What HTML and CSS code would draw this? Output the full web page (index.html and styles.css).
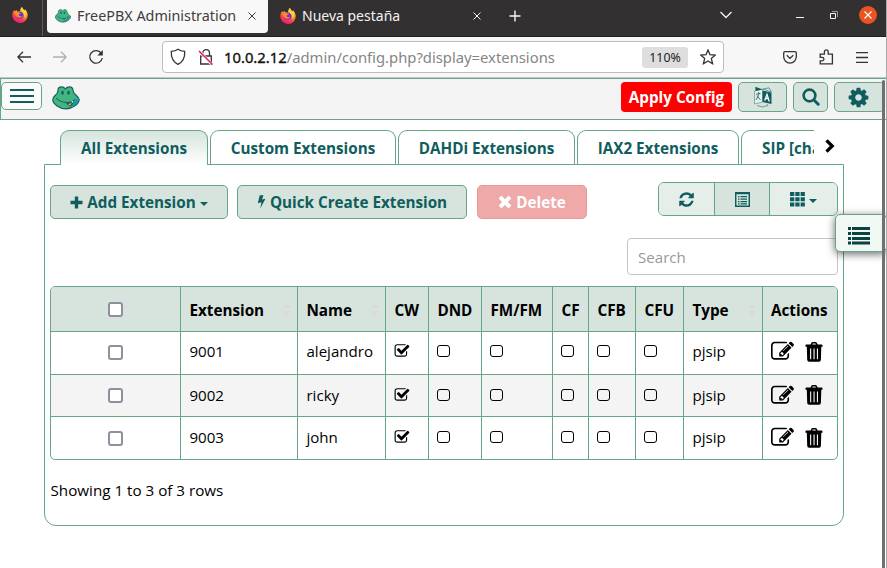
FILE: index.html
```html
<!DOCTYPE html>
<html lang="es">
<head>
<meta charset="utf-8">
<title>FreePBX Administration</title>
<link rel="stylesheet" href="styles.css">
</head>
<body>
<svg class="defs" aria-hidden="true">
  <defs>
    <linearGradient id="flame" x1=".8" y1="0" x2=".3" y2="1"><stop offset="0" stop-color="#fff14a"/><stop offset=".4" stop-color="#ff9a26"/><stop offset=".72" stop-color="#ff3b4a"/><stop offset="1" stop-color="#e5168c"/></linearGradient>
    <symbol id="firefox" viewBox="0 0 16 16">
      <path fill="url(#flame)" d="M10 0c.4 1.700 1.500 2.300 2.600 3.500.3-.4.2-1 .1-1.400 1.800 1.500 3 3.900 3 6.100A7.700 7.700 0 0 1 .3 8.400C.3 6 1.200 4.200 2.300 3l.5 1.300C3.300 3.600 4.200 3 5 2.900c-.3.6-.2 1.100.1 1.500L8 4.200C8 2.400 8.800.9 10 0z"/>
      <circle cx="7.800" cy="8.200" r="3.600" fill="#6a35d8"/>
      <path fill="#ff8b24" d="M3 5c1.600-.8 3-.5 4 .5l1.800.2C8.600 7 7.300 6.900 6.500 7.700c.6 1.700 2.600 2 4 1-1 2.400-4.400 2.800-6.200.6C3.400 8.200 3 6.500 3 5z"/>
      <path fill="#ffd43a" d="M10 0c.4 1.700 1.500 2.300 2.600 3.500 2 2.600 1.500 6-.3 7.700.5-3-.3-4.700-2.100-6C8.800 4.200 8.800 1.500 10 0z"/>
    </symbol>
    <symbol id="frog" viewBox="0 0 28 24">
      <path fill="#43b581" stroke="#14605f" stroke-width="1.200" d="M6 4.500C6 2 7.500.9 9.500.9c1.700 0 3.100.8 3.900 2.100.9-1.300 2.300-2.100 4-2.100C19.400.9 20.900 2 21 4.500c.2 2.200 1.300 3.100 2.600 4.300 1.600 1.500 3.600 3 3.600 4.700 0 4.300-7 9.400-13.200 9.400S.8 18 .8 13.800C.8 12 2 10.300 3.600 9 5.300 7.500 6 6.500 6 4.500z"/>
      <path fill="#1b9aa0" d="M26.800 12.200c.8 3.600-4 8.500-9.800 9.900l3.300-4.200 2.300-5z"/>
      <ellipse cx="10.500" cy="6.700" rx="1.300" ry="2" fill="#14605f"/><ellipse cx="16.500" cy="6.700" rx="1.300" ry="2" fill="#14605f"/>
      <path fill="none" stroke="#14605f" stroke-width="1" d="M4 12c3 3.300 8 4.900 12.500 4.300 2.500-.3 4.500-1.300 6-2.900"/>
      <path fill="#14605f" d="M14 16.500c3.300.2 5.700-.7 8-2.600-.2 3.200-1.600 5.700-4 6.300-1.700.2-3.200-1.700-4-3.700z"/>
      <path fill="#f6a23d" d="M16 19.300c.5-1.600 1.900-2.300 3.800-2-.6 1.500-2 2.700-3.800 2z"/>
      <path fill="#fff" d="m19 15.800 2.300-1.100-.5 2z"/>
    </symbol>
    <symbol id="check" viewBox="0 0 1792 1792"><path d="M1472 930v318q0 119-84.500 203.500t-203.500 84.500h-832q-119 0-203.500-84.500t-84.500-203.500v-832q0-119 84.500-203.500t203.500-84.500h832q63 0 117 25 15 7 18 23 3 17-9 29l-49 49q-10 10-23 10-3 0-9-2-23-6-45-6h-832q-66 0-113 47t-47 113v832q0 66 47 113t113 47h832q66 0 113-47t47-113v-254q0-13 9-22l64-64q10-10 23-10 6 0 12 3 20 8 20 29zm231-489l-814 814q-24 24-57 24t-57-24l-430-430q-24-24-24-57t24-57l110-110q24-24 57-24t57 24l263 263 647-647q24-24 57-24t57 24l110 110q24 24 24 57t-24 57z"/></symbol>
    <symbol id="edit" viewBox="0 0 1792 1792"><path d="M888 1184l116-116-152-152-116 116v56h96v96h56zm440-720q-16-16-33 1l-350 350q-17 17-1 33t33-1l350-350q17-17 1-33zm80 594v190q0 119-84.500 203.500t-203.500 84.500h-832q-119 0-203.500-84.500t-84.500-203.500v-832q0-119 84.500-203.500t203.500-84.500h832q63 0 117 25 15 7 18 23 3 17-9 29l-49 49q-14 14-32 8-23-6-45-6h-832q-66 0-113 47t-47 113v832q0 66 47 113t113 47h832q66 0 113-47t47-113v-126q0-13 9-22l64-64q15-15 35-7t20 29zm-96-738l288 288-672 672h-288v-288zm444 132l-92 92-288-288 92-92q28-28 68-28t68 28l152 152q28 28 28 68t-28 68z"/></symbol>
    <symbol id="trash" viewBox="0 0 18 20"><path fill-rule="evenodd" d="M5.500 2.600 6.300.9Q6.700.1 7.600.1h3Q11.500.1 11.900.9l.8 1.700h4q.8 0 .8.8v1.400h-1.200l-.4 13q-.1 2-1.900 2H4.100q-1.800 0-1.900-2l-.4-13H.5V3.400q0-.8.800-.8zm1.700 0h3.800l-.5-1.100H7.700zM5.100 6.500v10.700h1.100V6.500zm3.400 0v10.700h1.100V6.500zm3.400 0v10.700h1.100V6.500z"/></symbol>
    <symbol id="cog" viewBox="0 0 1792 1792"><path d="M1152 896q0-106-75-181t-181-75-181 75-75 181 75 181 181 75 181-75 75-181zm512-109v222q0 12-8 23t-20 13l-185 28q-19 54-39 91 35 50 107 138 10 12 10 25t-9 23q-27 37-99 108t-94 71q-12 0-26-9l-138-108q-44 23-91 38-16 136-29 186-7 28-36 28h-222q-14 0-24.500-8.500t-11.500-21.500l-28-184q-49-16-90-37l-141 107q-10 9-25 9-14 0-25-11-126-114-165-168-7-10-7-23 0-12 8-23 15-21 51-66.500t54-70.500q-27-50-41-99l-183-27q-13-2-21-12.500t-8-23.500v-222q0-12 8-23t19-13l186-28q14-46 39-92-40-57-107-138-10-12-10-24 0-10 9-23 26-36 98.500-107.500t94.500-71.500q13 0 26 10l138 107q44-23 91-38 16-136 29-186 7-28 36-28h222q14 0 24.500 8.500t11.500 21.500l28 184q49 16 90 37l142-107q9-9 24-9 13 0 25 10 129 119 165 170 7 8 7 22 0 12-8 23-15 21-51 66.500t-54 70.500q26 50 41 98l183 28q13 2 21 12.500t8 23.500z"/></symbol>
    <symbol id="refresh" viewBox="0 0 1792 1792"><path d="M1639 1056q0 5-1 7-64 268-268 434.500t-478 166.500q-146 0-282.500-55t-243.500-157l-129 129q-19 19-45 19t-45-19-19-45v-448q0-26 19-45t45-19h448q26 0 45 19t19 45-19 45l-137 137q71 66 161 102t187 36q134 0 250-65t186-179q11-17 53-117 8-23 30-23h192q13 0 22.500 9.500t9.500 22.500zm25-800v448q0 26-19 45t-45 19h-448q-26 0-45-19t-19-45 19-45l138-138q-148-137-349-137-134 0-250 65t-186 179q-11 17-53 117-8 23-30 23h-199q-13 0-22.500-9.500t-9.500-22.500v-7q65-268 270-434.500t480-166.500q146 0 284 55.500t245 156.500l130-129q19-19 45-19t45 19 19 45z"/></symbol>
  </defs>
</svg>

<div class="browser">
  <div class="tabstrip">
    <div class="pinned"><svg width="16" height="16"><use href="#firefox"/></svg></div>
    <div class="btab active"><svg width="16" height="14"><use href="#frog"/></svg><span class="t1">FreePBX Administration</span><svg class="x" width="8" height="8" viewBox="0 0 8 8"><path d="m.5.5 7 7m0-7-7 7"/></svg></div>
    <div class="btab"><svg width="16" height="16"><use href="#firefox"/></svg><span class="t2">Nueva pestaña</span><svg class="x" width="8" height="8" viewBox="0 0 8 8"><path d="m.5.5 7 7m0-7-7 7"/></svg></div>
    <svg class="wm plus" width="12" height="12" viewBox="0 0 12 12"><path stroke-width="1.400" d="M6 .5v11M.5 6h11"/></svg>
    <svg class="wm down" width="12" height="8" viewBox="0 0 12 8"><path stroke-width="1.300" d="m.5 1 5.500 5.500L11.500 1"/></svg>
    <svg class="wm mini" width="8" height="8" viewBox="0 0 8 8"><path d="M0 7.500h8"/></svg>
    <svg class="wm restore" width="8" height="8" viewBox="0 0 8 8"><path d="M.5 2.500h5v5h-5z"/><path stroke="#999" d="M2 .5h5.500V6"/></svg>
    <span class="close"><svg width="8" height="8" viewBox="0 0 8 8"><path d="m.5.500 7 7m0-7-7 7"/></svg></span>
  </div>
  <div class="toolbar">
    <svg class="line" width="14" height="12" viewBox="0 0 14 12"><path d="M14 6H1m5-5.300L.8 6 6 11.300"/></svg>
    <svg class="line fwd" width="14" height="12" viewBox="0 0 14 12"><path d="M0 6h13M8 .7 13.200 6 8 11.300"/></svg>
    <svg class="line reload" width="16" height="16" viewBox="0 0 16 16"><path d="M13.300 4.300A6.300 6.300 0 1 0 14.300 9"/><path fill="#333" stroke="none" d="M14.800 1v5.500H9.300z"/></svg>
    <div class="urlbar">
      <svg class="line shield" width="16" height="18" viewBox="0 0 16 18"><path d="M8 1.200c2 1.500 4.200 2 6.700 2.200.3 5.800-1.400 10.400-6.700 12.900C2.700 13.800 1 9.200 1.300 3.400 3.800 3.200 6 2.700 8 1.200z"/></svg>
      <svg class="line lock" width="16" height="18" viewBox="0 0 16 18"><path d="M2.700 8h10.600v8H2.700zM4.700 8V5a3.400 3.400 0 0 1 6.800 0v3"/><path stroke="#f7f7f7" stroke-width="3" d="m1.500 3.500 12 12.500"/><path stroke="#e2174c" stroke-width="1.400" d="m1 3 13.500 13.500"/></svg>
      <span class="url"><b>10.0.2.12</b>/admin/config.php?display=extensions</span>
      <span class="zoomlvl">110%</span>
      <svg class="line" width="16" height="16" viewBox="0 0 16 16"><path d="m8 .9 2 4.800 5.300.4-4 3.400 1.300 5.200L8 11.900l-4.600 2.800 1.300-5.200-4-3.400L6 5.700z"/></svg>
    </div>
    <svg class="line pocket" width="14" height="13" viewBox="0 0 14 13"><path d="M2 .7h10q1.300 0 1.300 1.300v3.800a6.300 6.300 0 0 1-12.600 0V2Q.7.700 2 .7zM3.800 4.300 7 7.400l3.200-3.100"/></svg>
    <svg class="line puzzle" width="15" height="16" viewBox="0 0 15 16"><path d="M1.200 5.200h4.200V2.800a1.900 1.900 0 0 1 3.800 0v2.400h4.200v9.700H1.200v-3h1.900a1.800 1.800 0 0 0 0-3.600H1.200z"/></svg>
    <svg class="line" width="12" height="11" viewBox="0 0 12 11"><path d="M0 .5h12M0 5.500h12M0 10.500h12"/></svg>
  </div>
</div>

<div class="page">
  <header class="topbar">
    <button class="burger"><i></i><i></i><i></i></button>
    <svg class="logo" width="28" height="24"><use href="#frog"/></svg>
    <button class="apply">Apply Config</button>
    <button class="hbtn lang"><svg width="20" height="22" viewBox="0 0 20 22"><path fill="#e8f1ec" stroke="#6b9c93" stroke-width=".8" d="m1.500 5 8-2v13l-8 2z"/><path fill="#0f5d5d" d="m9.500 4.500 9 2V18l-9-2z"/><path fill="#0f5d5d" d="m2.300.7 7.300 2.800L2.500 5z"/><path fill="none" stroke="#0f5d5d" stroke-width=".8" d="m3 8.300 4.500-1M5.500 6l.5 2-3 6m1-4.500L7.500 14"/><path fill="none" stroke="#fff" stroke-width="1.300" d="m11.700 14.500 2.300-6 2.300 7m-3.700-3h3"/><path fill="none" stroke="#6b9c93" d="M4 19.500q5 3 11 0l-1-1.300M18.500 6 10 3l6-1.200z"/></svg></button>
    <button class="hbtn find"><svg width="18" height="18" viewBox="0 0 18 18"><circle cx="7.500" cy="7.500" r="5.900" fill="none" stroke="#0f5d5d" stroke-width="2.600"/><path stroke="#0f5d5d" stroke-width="3" stroke-linecap="round" d="m12.200 12.200 4 4"/></svg></button>
    <button class="hbtn gear"><svg width="23" height="23"><use href="#cog"/></svg></button>
  </header>

  <nav class="tabs">
    <div class="scroller">
      <a class="tab on">All Extensions</a><a class="tab w2">Custom Extensions</a><a class="tab w3">DAHDi Extensions</a><a class="tab w4">IAX2 Extensions</a><a class="tab w5">SIP [chan_sip] Extensions</a>
    </div>
    <svg class="next" width="10" height="14" viewBox="0 0 10 14"><path fill="none" stroke="#000" stroke-width="3.300" d="m1.500 1.300 5.700 5.700-5.700 5.700"/></svg>
  </nav>

  <main class="panel">
    <div class="actions">
      <button class="btn add"><svg width="13" height="13" viewBox="0 0 13 13"><path stroke-width="3.400" d="M6.500.5v12M.5 6.500h12"/></svg><span>Add Extension</span><i class="caret"></i></button>
      <button class="btn quick"><svg width="9" height="14" viewBox="0 0 9 14"><path class="fill" d="M2.700.3h3.800L5 4.500l3.500-.8L3.200 13.600 4.500 7.300.8 8.200z"/></svg><span>Quick Create Extension</span></button>
      <button class="btn del"><svg width="14" height="14" viewBox="0 0 14 14"><path stroke-width="4" d="m2 2 10 10m0-10L2 12"/></svg><span>Delete</span></button>
      <div class="group">
        <button class="g1"><svg width="17" height="17"><use href="#refresh"/></svg></button>
        <button class="g2"><svg width="15" height="15" viewBox="0 0 15 15"><path fill="none" stroke="#0f5d5d" stroke-width="1.500" d="M.7.7h13.600v13.600H.7z"/><path fill="#0f5d5d" d="M1 0h13v2.300H1zM3 4h1.500v1.300H3zM3 6.500h1.500v1.300H3zM3 9h1.500v1.300H3zM3 11.300h1.500v1.300H3zM5.500 4H12v1.300H5.500zM5.500 6.500H12v1.300H5.500zM5.500 9H12v1.300H5.500zM5.500 11.300H12v1.300H5.500z"/></svg></button>
        <button class="g3"><svg width="15" height="15" viewBox="0 0 15 15"><path fill="#0f5d5d" d="M0 0h4.300v4H0zM5.300 0h4.300v4H5.300zM10.600 0h4.300v4h-4.300zM0 5.300h4.300v4H0zM5.300 5.300h4.300v4H5.300zM10.600 5.300h4.300v4h-4.300zM0 10.600h4.300v4H0zM5.300 10.600h4.300v4H5.300zM10.600 10.600h4.300v4h-4.300z"/></svg><i class="caret"></i></button>
      </div>
    </div>
    <div class="search">Search</div>
    <div class="tablewrap">
      <table>
        <colgroup><col class="c1"><col class="c2"><col class="c3"><col class="c4"><col class="c5"><col class="c6"><col class="c7"><col class="c8"><col class="c9"><col class="c10"><col class="c11"></colgroup>
        <thead><tr><th class="sel"><i class="cb"></i></th><th class="sort">Extension</th><th class="sort">Name</th><th>CW</th><th>DND</th><th>FM/FM</th><th>CF</th><th>CFB</th><th>CFU</th><th class="sort">Type</th><th>Actions</th></tr></thead>
        <tbody>
          <tr><td class="sel"><i class="cb"></i></td><td>9001</td><td>alejandro</td><td><svg class="ck" width="16" height="16"><use href="#check"/></svg></td><td><i class="sq"></i></td><td><i class="sq"></i></td><td><i class="sq"></i></td><td><i class="sq"></i></td><td><i class="sq"></i></td><td>pjsip</td><td><div class="ops"><svg width="23" height="23"><use href="#edit"/></svg><svg width="18" height="20"><use href="#trash"/></svg></div></td></tr>
          <tr class="alt"><td class="sel"><i class="cb"></i></td><td>9002</td><td>ricky</td><td><svg class="ck" width="16" height="16"><use href="#check"/></svg></td><td><i class="sq"></i></td><td><i class="sq"></i></td><td><i class="sq"></i></td><td><i class="sq"></i></td><td><i class="sq"></i></td><td>pjsip</td><td><div class="ops"><svg width="23" height="23"><use href="#edit"/></svg><svg width="18" height="20"><use href="#trash"/></svg></div></td></tr>
          <tr><td class="sel"><i class="cb"></i></td><td>9003</td><td>john</td><td><svg class="ck" width="16" height="16"><use href="#check"/></svg></td><td><i class="sq"></i></td><td><i class="sq"></i></td><td><i class="sq"></i></td><td><i class="sq"></i></td><td><i class="sq"></i></td><td>pjsip</td><td><div class="ops"><svg width="23" height="23"><use href="#edit"/></svg><svg width="18" height="20"><use href="#trash"/></svg></div></td></tr>
        </tbody>
      </table>
    </div>
    <p class="info">Showing 1 to 3 of 3 rows</p>
  </main>
</div>

<div class="drawer"><svg width="22" height="18" viewBox="0 0 22 18"><path fill="#0b4340" d="M0 0h3v3H0zM4 0h18v3H4zM0 5h3v3H0zM4 5h18v3H4zM0 10h3v3H0zM4 10h18v3H4zM0 14.500h3v3H0zM4 14.500h18v3H4z"/></svg></div>
<div class="scrollbar"></div>
<div class="edge"></div>
</body>
</html>
```
FILE: styles.css
```css
* { box-sizing: border-box; }
body {
  margin: 0;
  width: 887px;
  height: 568px;
  overflow: hidden;
  position: relative;
  background: #fff;
  color: #000;
  font: 15.4px/22px "Open Sans", "Noto Sans", sans-serif;
}
.defs { position: absolute; width: 0; height: 0; }
svg { display: block; flex: none; }
button { margin: 0; padding: 0; font: inherit; display: flex; align-items: center; justify-content: center; }

/* browser chrome */
.browser { font-family: "Noto Sans", sans-serif; }
.tabstrip { height: 37px; display: flex; align-items: flex-start; background: #323031; border-bottom: 1px solid #1f1f1f; }
.pinned { width: 43px; height: 36px; padding: 7px 0 0 12px; border-right: 1px solid #5d5b5c; margin-right: 4px; }
.btab { width: 221px; height: 33px; padding: 0 12px 2px 8px; display: flex; align-items: center; color: #f2f2f2; }
.btab + .btab { width: 223px; padding-left: 12px; padding-right: 10px; }
.btab span { margin-left: 6px; flex: 1; white-space: nowrap; font-size: 14.35px; }
.btab .t2 { font-size: 14px; }
.btab.active { background: #f8f8f8; color: #3d3d3d; border-radius: 0 0 4px 4px; }
.x { fill: none; stroke: currentColor; stroke-width: 1; }
.wm { fill: none; stroke: #f5f5f5; }
.plus { margin: 10px 0 0 18px; }
.down { margin: 11px 0 0 199px; }
.mini { margin: 10px 0 0 64px; }
.restore { margin: 11px 0 0 26px; }
.close { width: 18px; height: 18px; margin: 6px 0 0 21px; border-radius: 9px; background: #e95420; display: flex; align-items: center; justify-content: center; }
.close svg { fill: none; stroke: #fff; stroke-width: 1.2; }
.toolbar { height: 41px; background: #f7f7f7; border-bottom: 1px solid #c6c6c6; display: flex; align-items: center; padding-left: 17px; }
.line { fill: none; stroke: #333; stroke-width: 1.3; }
.fwd { margin-left: 22px; stroke: #b0b0b0; }
.reload { margin-left: 21px; }
.urlbar { width: 562px; height: 32px; margin-left: 58px; padding: 0 7px; border: 1px solid #bdbdbd; border-radius: 4px; background: #fff; display: flex; align-items: center; }
.lock { margin-left: 12px; }
.url { margin-left: 10px; flex: 1; color: #858585; white-space: nowrap; font-size: 14.8px; }
.url b { color: #111; font-weight: 400; -webkit-text-stroke: .35px #111; }
.zoomlvl { width: 46px; height: 21px; margin-right: 12px; border-radius: 3px; background: #dedede; color: #222; font-size: 12.4px; line-height: 21px; text-align: center; }
.pocket { margin-left: 59px; }
.puzzle { margin: 0 22px 0 22px; }

/* application bar */
.topbar { height: 42px; border: 1px solid #66a586; background: #f4f4f4; display: flex; align-items: flex-start; padding-top: 3px; }
.burger { width: 41px; height: 28px; border: 1px solid #66a586; border-radius: 5px; background: #fbfbfb; flex-direction: column; gap: 4px; }
.burger i { width: 24px; height: 2px; background: #0f5d5d; }
.logo { margin: 4px 0 0 10px; }
.apply { width: 111px; height: 30px; margin-left: 541px; padding-bottom: 1px; border: 0; border-radius: 4px; background: #f00; color: #fff; font-weight: 700; font-size: 15.25px; }
.hbtn { height: 30px; margin-left: 6px; border: 1px solid #66a586; border-radius: 5px; background: #d7e4dd; fill: #0f5d5d; }
.lang { width: 49px; }
.find { width: 35px; }
.gear { width: 51px; padding-right: 3px; flex: none; }

/* extension tabs */
.tabs { margin: 10px 0 0 44px; width: 800px; height: 35px; display: flex; position: relative; z-index: 1; }
.scroller { width: 770px; padding-left: 16px; display: flex; gap: 2px; overflow: hidden; }
.tab { flex: none; height: 34px; border: 1px solid #66a586; border-bottom: 0; border-radius: 9px 9px 0 0; background: #fff; color: #0f5d5d; font-weight: 700; font-size: 15.25px; line-height: 35px; text-align: center; white-space: nowrap; }
.tab.on { width: 148px; height: 35px; background: linear-gradient(#d7e4dd, #fff); }
.w2 { width: 186px; }
.w3 { width: 177px; }
.w4 { width: 162px; }
.w5 { padding: 0 20px; }
.next { margin: 9px 0 0 11px; }

/* main panel */
.panel { width: 800px; height: 362px; margin: -1px 0 0 44px; padding: 17px 5px 0; border: 1px solid #66a586; border-radius: 0 0 12px 12px; }
.actions { display: flex; align-items: flex-start; height: 34px; }
.btn { height: 34px; margin-top: 3px; border: 1px solid #66a586; border-radius: 5px; background: #d7e4dd; color: #0f5d5d; font-weight: 700; font-size: 15.25px; white-space: nowrap; }
.btn svg { fill: none; stroke: currentColor; margin-right: 4px; }
.btn .fill { fill: currentColor; stroke: none; }
.caret { border: 4px solid transparent; border-top-color: #0f5d5d; border-bottom: 0; margin: 3px 0 0 4px; }
.add { width: 178px; }
.quick { width: 230px; margin-left: 9px; }
.del { width: 110px; margin-left: 10px; background: #eea9a8; border-color: #e99a98; color: #fff; }
.group { width: 180px; height: 34px; margin-left: 71px; display: flex; border: 1px solid #66a586; border-radius: 6px; overflow: hidden; }
.group button { border: 0; background: #e5eee9; fill: #0f5d5d; }
.g1 { width: 55px; }
.group .g2 { width: 56px; background: #d7e4dd; border: solid #66a586; border-width: 0 1px; }
.g3 { flex: 1; }
.search { width: 211px; height: 37px; margin: 22px 0 0 577px; padding-left: 10px; border: 1px solid #c5c5c5; border-radius: 4px; line-height: 37px; font-size: 15.1px; color: #999; }
.tablewrap { width: 788px; height: 174px; margin-top: 11px; border: 1px solid #66a586; border-radius: 5px; overflow: hidden; }
table { width: 786px; border-collapse: separate; border-spacing: 0; table-layout: fixed; }
.c1 { width: 130px; } .c2 { width: 117px; } .c3 { width: 88px; } .c4 { width: 43px; }
.c5 { width: 53px; } .c6 { width: 71px; } .c7 { width: 36px; } .c8 { width: 47px; }
.c9 { width: 48px; } .c10 { width: 79px; } .c11 { width: 74px; }
th, td { padding: 0 0 0 8.45px; text-align: left; white-space: nowrap; border: solid #66a586; border-width: 0 1px 1px 0; vertical-align: middle; }
th:last-child, td:last-child { padding-left: 8px; border-right: 0; }
tbody tr:last-child td { border-bottom: 0; }
th { height: 45px; padding-top: 1px; background: #d7e4dd; font-weight: 700; font-size: 15.25px; }
td { height: 43px; padding-bottom: 4px; font-size: 15.1px; line-height: 20px; }
.alt td { height: 42px; padding-bottom: 2px; background: #f4f4f4; }
tbody tr:last-child td { padding-bottom: 3px; }
th.sel { padding: 0; }
tbody td.sel, tbody tr:last-child td.sel { padding: 0 0 1px; }
.cb { display: block; width: 15px; height: 15px; margin: 0 auto; border: 2px solid #8f8f9d; border-radius: 3px; background: #fff; }
.sq { display: block; width: 13px; height: 12px; border: 1.5px solid #000; border-radius: 3px; }
.ck { margin-left: -.5px; }
.sort { position: relative; }
.sort::before, .sort::after { content: ""; position: absolute; right: 6px; border: 4px solid transparent; }
.sort::before { top: 16px; border-top: 0; border-bottom: 5px solid #dbdadb; }
.sort::after { top: 24px; border-bottom: 0; border-top: 5px solid #dbdadb; }
.ops { display: flex; align-items: center; gap: 11px; height: 23px; padding-top: 1px; }
.info { margin: 19px 0 0 .5px; font-size: 15.2px; line-height: 22px; }

/* overlays */
.drawer { position: absolute; left: 835px; top: 214px; width: 52px; height: 38px; padding: 12px 0 0 12px; border: 1px solid #66a586; border-radius: 5px; background: #f1f8f4; box-shadow: 0 2px 9px rgba(0, 0, 0, .6); z-index: 2; }
.scrollbar { position: absolute; left: 882px; top: 80px; width: 3px; height: 488px; background: #707070; border-radius: 2px 2px 0 0; z-index: 3; }
.edge { position: absolute; left: 886px; top: 0; width: 1px; height: 568px; background: #a8a8a8; z-index: 3; }
```
